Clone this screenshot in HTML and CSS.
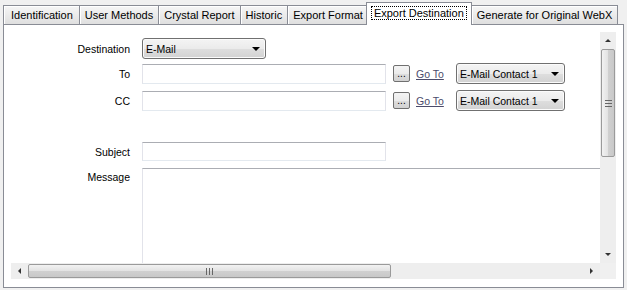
FILE: index.html
```html
<!DOCTYPE html>
<html lang="en">
<head>
    <meta charset="UTF-8">
    <title>Export Destination</title>
    <link rel="stylesheet" href="styles.css">
</head>
<body>
    <div class="tabs">
        <div class="tab">Identification</div>
        <div class="tab">User Methods</div>
        <div class="tab">Crystal Report</div>
        <div class="tab">Historic</div>
        <div class="tab">Export Format</div>
        <div class="tab active"><span class="focus">Export Destination</span></div>
        <div class="tab">Generate for Original WebX</div>
    </div>

    <div class="panel">
        <div class="scroller">
            <div class="view">
                <form class="form">
                    <div class="row r-dest">
                        <label class="lbl">Destination</label>
                        <div class="select dest">E-Mail <span class="caret"></span></div>
                    </div>
                    <div class="row r-to">
                        <label class="lbl">To</label>
                        <div class="input addr"></div>
                        <div class="dots">...</div>
                        <a class="goto">Go To</a>
                        <div class="select contact">E-Mail Contact 1 <span class="caret"></span></div>
                    </div>
                    <div class="row r-cc">
                        <label class="lbl">CC</label>
                        <div class="input addr"></div>
                        <div class="dots">...</div>
                        <a class="goto">Go To</a>
                        <div class="select contact">E-Mail Contact 1 <span class="caret"></span></div>
                    </div>
                    <div class="row r-subject">
                        <label class="lbl">Subject</label>
                        <div class="input subject"></div>
                    </div>
                    <div class="row r-message">
                        <label class="lbl">Message</label>
                        <div class="input message"></div>
                    </div>
                </form>
            </div>

            <!-- vertical scrollbar -->
            <div class="vbar">
                <div class="sbtn"><span class="arr up"></span></div>
                <div class="thumb vthumb"><span class="grip-h"></span></div>
                <div class="track"></div>
                <div class="sbtn"><span class="arr down"></span></div>
            </div>

            <!-- horizontal scrollbar -->
            <div class="hbar">
                <div class="sbtn"><span class="arr left"></span></div>
                <div class="thumb hthumb"><span class="grip-v"></span></div>
                <div class="track"></div>
                <div class="sbtn"><span class="arr right"></span></div>
            </div>
            <div class="corner"></div>
        </div>
    </div>
</body>
</html>
```

FILE: styles.css
```css
body{
    margin: 0;
    background-color: #f0f0f0;
    font-family: "Liberation Sans", Arial, sans-serif;
    font-size: 11px;
    color: #000;
}

/* tab strip */
.tabs{
    display: flex;
    align-items: flex-end;
    height: 21px;
    padding: 3px 3px 0 3px;
}
.tab{
    height: 18px;
    line-height: 18px;
    padding: 0 5px;
    border: 1px solid #898c95;
    border-bottom: none;
    margin-right: -1px;
    background: linear-gradient(#f6f6f6, #ececec 45%, #dfdfdf);
    box-shadow: inset 1px 1px 0 #ffffff;
    white-space: nowrap;
}
.tab:first-child{ padding: 0 6px 0 7px; }
.tab.active{
    position: relative;
    z-index: 1;
    height: 22px;
    line-height: 20px;
    margin: 0 -1px -1px -2px;
    padding: 0 4px;
    background: #fff;
    box-shadow: none;
}
.focus{
    border: 1px dotted #000;
    padding: 0 2px;
}

/* panel */
.panel{
    margin: 0 3px;
    border: 1px solid #898c95;
    background-color: #fff;
    padding: 7px 7px 8px 7px;
    height: 247px;
}
.scroller{
    display: grid;
    grid-template-columns: 1fr 16px;
    grid-template-rows: 1fr 16px;
    height: 247px;
}
.view{
    overflow: hidden;
    background: #fff;
}

/* form */
.form{
    padding-top: 6px;
    font-size: 10.5px;
}
.row{
    display: flex;
    align-items: center;
    height: 21px;
}
.r-to{ margin-top: 4px; }
.r-cc{ margin-top: 6px; }
.r-subject{ margin-top: 31px; height: 19px; }
.r-message{ margin-top: 7px; align-items: flex-start; height: auto; }
.lbl{
    width: 119px;
    margin-right: 12px;
    text-align: right;
    flex-shrink: 0;
}
.r-message .lbl{ padding-top: 3px; }

.input{
    box-sizing: border-box;
    background: #fff;
    border: 1px solid #e2e3ea;
    border-top-color: #abadb3;
    border-bottom-color: #e3e9ef;
    flex-shrink: 0;
}
.addr{ width: 244px; height: 20px; }
.subject{ width: 244px; height: 19px; }
.message{ width: 480px; height: 120px; }

.select{
    box-sizing: border-box;
    display: flex;
    align-items: center;
    justify-content: space-between;
    height: 21px;
    padding: 0 5px 0 3px;
    border: 1px solid #707070;
    border-radius: 3px;
    background: linear-gradient(#f4f4f4, #ebebeb 50%, #dedede 51%, #d2d2d2);
    box-shadow: inset 0 0 0 1px #fbfbfb;
    white-space: nowrap;
    flex-shrink: 0;
}
.dest{ width: 124px; }
.contact{ width: 109px; margin-left: 10px; }
.caret{
    width: 0;
    height: 0;
    border-left: 4px solid transparent;
    border-right: 4px solid transparent;
    border-top: 4px solid #000;
}

.dots{
    box-sizing: border-box;
    width: 17px;
    height: 17px;
    margin-left: 7px;
    border: 1px solid #707070;
    border-radius: 2px;
    background: linear-gradient(#f4f4f4, #ebebeb 50%, #dedede 51%, #d2d2d2);
    text-align: center;
    line-height: 16px;
    font-size: 10px;
    flex-shrink: 0;
}
.goto{
    margin-left: 6px;
    width: 30px;
    color: #4b4b6b;
    text-decoration: underline;
    white-space: nowrap;
}

/* scrollbars */
.vbar, .hbar{
    display: flex;
    background: #eeeeee;
}
.vbar{ flex-direction: column; }
.track{ flex: 1; }
.sbtn{
    width: 16px;
    height: 17px;
    display: flex;
    align-items: center;
    justify-content: center;
    flex-shrink: 0;
}
.hbar .sbtn{ width: 17px; height: 16px; }
.thumb{
    box-sizing: border-box;
    border: 1px solid #9a9a9a;
    border-radius: 2px;
    display: flex;
    align-items: center;
    justify-content: center;
    flex-shrink: 0;
}
.vthumb{
    height: 108px;
    margin: 0 1px;
    background: linear-gradient(to right, #f2f2f2, #e2e2e2 50%, #d0d0d0 51%, #c8c8c8);
}
.hthumb{
    width: 363px;
    margin: 1px 0;
    background: linear-gradient(#f2f2f2, #e2e2e2 50%, #d0d0d0 51%, #c8c8c8);
}
.grip-h{
    width: 7px;
    height: 7px;
    border-top: 1px solid #666;
    border-bottom: 1px solid #666;
    background: linear-gradient(transparent 2px, #666 2px, #666 3px, transparent 3px);
    box-sizing: border-box;
}
.grip-v{
    width: 7px;
    height: 7px;
    border-left: 1px solid #666;
    border-right: 1px solid #666;
    background: linear-gradient(to right, transparent 2px, #666 2px, #666 3px, transparent 3px);
    box-sizing: border-box;
}
.arr{
    width: 0;
    height: 0;
}
.arr.up{
    border-left: 3px solid transparent;
    border-right: 3px solid transparent;
    border-bottom: 3px solid #333;
}
.arr.down{
    border-left: 3px solid transparent;
    border-right: 3px solid transparent;
    border-top: 3px solid #333;
}
.arr.left{
    border-top: 3px solid transparent;
    border-bottom: 3px solid transparent;
    border-right: 3px solid #333;
}
.arr.right{
    border-top: 3px solid transparent;
    border-bottom: 3px solid transparent;
    border-left: 3px solid #333;
}
.corner{
    background: #f0f0f0;
}
```
